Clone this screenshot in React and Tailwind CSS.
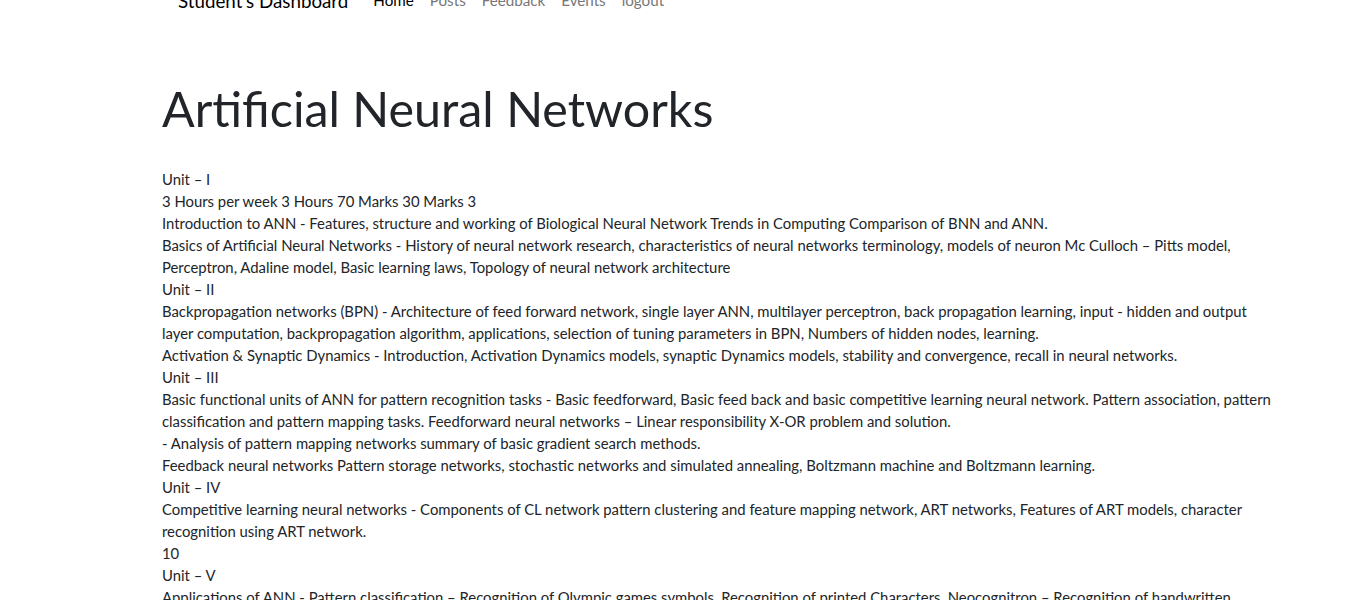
export default function App() {
  const lines = [
    "Unit – I",
    "3 Hours per week 3 Hours 70 Marks 30 Marks 3",
    "Introduction to ANN - Features, structure and working of Biological Neural Network Trends in Computing Comparison of BNN and ANN.",
    "Basics of Artificial Neural Networks - History of neural network research, characteristics of neural networks terminology, models of neuron Mc Culloch – Pitts model, Perceptron, Adaline model, Basic learning laws, Topology of neural network architecture",
    "Unit – II",
    "Backpropagation networks (BPN) - Architecture of feed forward network, single layer ANN, multilayer perceptron, back propagation learning, input - hidden and output layer computation, backpropagation algorithm, applications, selection of tuning parameters in BPN, Numbers of hidden nodes, learning.",
    "Activation & Synaptic Dynamics - Introduction, Activation Dynamics models, synaptic Dynamics models, stability and convergence, recall in neural networks.",
    "Unit – III",
    "Basic functional units of ANN for pattern recognition tasks - Basic feedforward, Basic feed back and basic competitive learning neural network. Pattern association, pattern classification and pattern mapping tasks. Feedforward neural networks – Linear responsibility X-OR problem and solution.",
    "- Analysis of pattern mapping networks summary of basic gradient search methods.",
    "Feedback neural networks Pattern storage networks, stochastic networks and simulated annealing, Boltzmann machine and Boltzmann learning.",
    "Unit – IV",
    "Competitive learning neural networks - Components of CL network pattern clustering and feature mapping network, ART networks, Features of ART models, character recognition using ART network.",
    "10",
    "Unit – V",
    "Applications of ANN - Pattern classification – Recognition of Olympic games symbols, Recognition of printed Characters, Neocognitron – Recognition of handwritten characters, NET Talk: to convert English text to speech, Recognition of consonant vowel (CV) segments, texture classification and segmentation.",
  ];

  const links = [
    { label: "Home", active: true },
    { label: "Posts" },
    { label: "Feedback" },
    { label: "Events" },
    { label: "logout" },
  ];

  return (
    <div className="min-h-screen bg-white text-[#212529] font-['Lato','Open_Sans',sans-serif]">
      {/* navbar, page is scrolled a bit so it is cut at the top */}
      <nav className="-mt-[19px] h-[40px] pl-[178px] flex items-center gap-[25px]">
        <span className="text-[18.75px] leading-none text-black">Student's Dashboard</span>
        <ul className="flex items-center gap-[16px] text-[15.2px] leading-none">
          {links.map((l) => (
            <li key={l.label} className={l.active ? "text-black" : "text-[#777777]"}>
              {l.label}
            </li>
          ))}
        </ul>
      </nav>

      <main className="ml-[162px] w-[1116px] pt-[58px]">
        <h1 className="text-[48.4px] leading-[1.2] font-normal mb-[31px]">Artificial Neural Networks</h1>
        <div className="text-[14.86px] leading-[22px]">
          {lines.map((t, i) => (
            <p key={i}>{t}</p>
          ))}
        </div>
      </main>
    </div>
  );
}
